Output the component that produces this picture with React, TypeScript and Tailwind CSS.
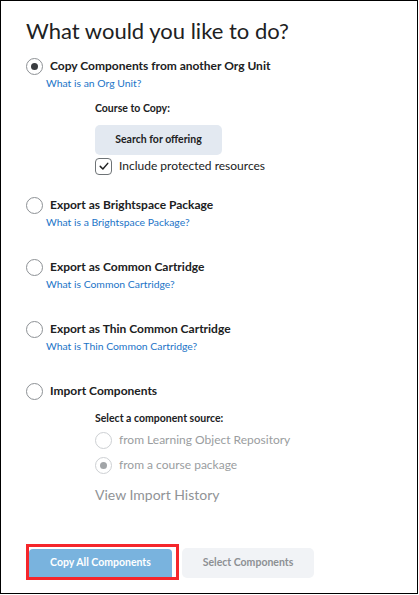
import * as React from 'react'

function Radio({ checked = false, disabled = false }: { checked?: boolean; disabled?: boolean }) {
  return (
    <span
      className={
        'flex size-[17px] shrink-0 items-center justify-center rounded-full border bg-white ' +
        (disabled ? 'border-[#cdd0d3]' : 'border-[#8d9195]')
      }
    >
      {checked && (
        <span className={'size-[7px] rounded-full ' + (disabled ? 'bg-[#a2a5a8]' : 'bg-[#3a3d40]')} />
      )}
    </span>
  )
}

function Option({
  label,
  link,
  checked,
  first,
}: {
  label: string
  link: string
  checked?: boolean
  first?: boolean
}) {
  return (
    <div className={first ? 'mt-[13px]' : 'mt-[29px]'}>
      <div className="flex h-[16px] items-center gap-[7px]">
        <Radio checked={checked} />
        <span className="text-[12px] font-bold text-[#202122]">{label}</span>
      </div>
      <a className="mt-px ml-[20px] block h-[16px] text-[10.4px] leading-[16px] text-[#1b74c7]">{link}</a>
    </div>
  )
}

export default function App() {
  return (
    <div
      className="h-[594px] w-[418px] border border-black bg-white pt-[16px] pl-[25px]"
      style={{ fontFamily: 'Lato, "Noto Sans", sans-serif' }}
    >
      <h1 className="h-[28px] text-[22px] leading-[28px] font-normal text-[#202122]">
        What would you like to do?
      </h1>

      <Option first checked label="Copy Components from another Org Unit" link="What is an Org Unit?" />

      <div className="ml-[69px]">
        <div className="mt-[9px] h-[16px] text-[10.5px] leading-[16px] font-bold text-[#202122]">Course to Copy:</div>
        <button
          type="button"
          className="mt-[9px] h-[30px] w-[127px] rounded-[5px] bg-[#e3e9f1] text-[10.5px] font-bold text-[#202122]"
        >
          Search for offering
        </button>
        <label className="mt-[2px] flex h-[18px] items-center gap-[7px]">
          <span className="flex size-[17px] items-center justify-center rounded-[4px] border border-[#6e7376] bg-white">
            <svg viewBox="0 0 16 16" className="size-[12px]">
              <path d="M3 8.5 L6.5 12 L13 4.5" fill="none" stroke="#202122" strokeWidth="2" strokeLinecap="round" strokeLinejoin="round" />
            </svg>
          </span>
          <span className="text-[12px] text-[#202122]">Include protected resources</span>
        </label>
      </div>

      <div className="mt-[-7px]">
        <Option label="Export as Brightspace Package" link="What is a Brightspace Package?" />
      </div>
      <Option label="Export as Common Cartridge" link="What is Common Cartridge?" />
      <Option label="Export as Thin Common Cartridge" link="What is Thin Common Cartridge?" />

      <div className="mt-[29px] flex h-[16px] items-center gap-[7px]">
        <Radio />
        <span className="text-[12px] font-bold text-[#202122]">Import Components</span>
      </div>

      <div className="ml-[69px]">
        <div className="mt-[11px] h-[16px] text-[10.5px] leading-[16px] font-bold text-[#202122]">
          Select a component source:
        </div>
        <div className="mt-[5px] flex h-[18px] items-center gap-[7px]">
          <Radio disabled />
          <span className="text-[12px] text-[#9a9da0]">from Learning Object Repository</span>
        </div>
        <div className="mt-[7px] flex h-[18px] items-center gap-[7px]">
          <Radio disabled checked />
          <span className="text-[12px] text-[#9a9da0]">from a course package</span>
        </div>
        <div className="mt-[11px] h-[20px] text-[14px] leading-[20px] text-[#909396]">View Import History</div>
      </div>

      <div className="mt-[39px] flex items-start">
        <div className="border-[3px] border-[#f5262b] pt-px pr-[4px]">
          <button
            type="button"
            className="h-[28px] w-[143px] rounded-t-[4px] bg-[#79b3de] text-[10.5px] font-bold text-white"
          >
            Copy All Components
          </button>
        </div>
        <button
          type="button"
          className="mt-[4px] ml-[3px] h-[30px] w-[132px] rounded-[5px] bg-[#f1f3f6] text-[10.5px] font-bold text-[#8d9094]"
        >
          Select Components
        </button>
      </div>
    </div>
  )
}
